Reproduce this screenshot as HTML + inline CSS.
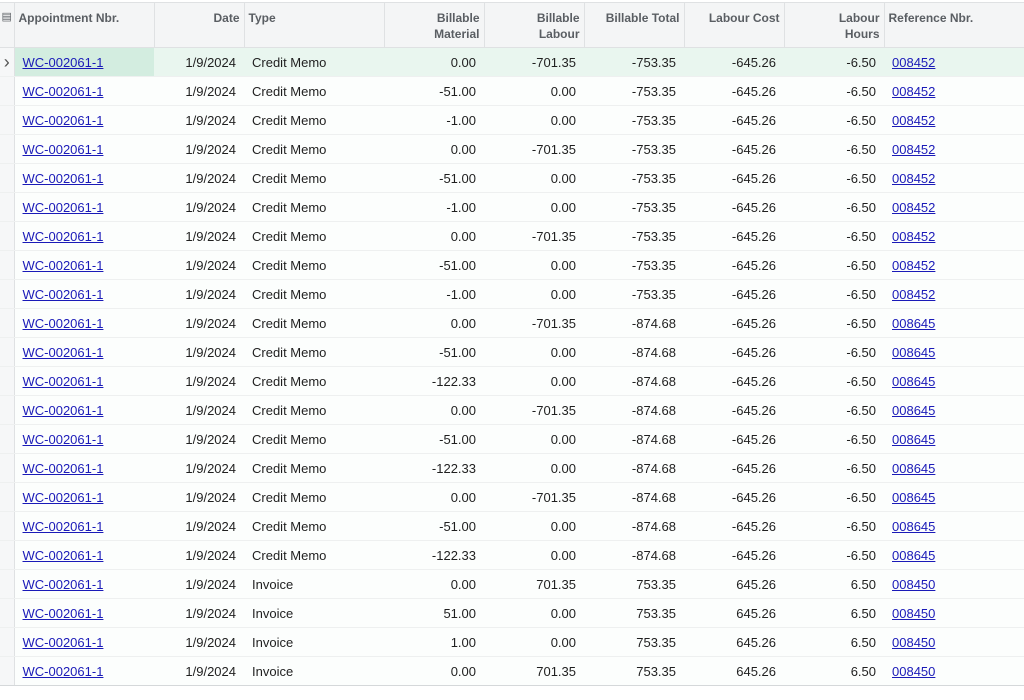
<!DOCTYPE html><html><head><style>
body{margin:0;width:1024px;height:700px;background:#fff;font-family:"Liberation Sans",Arial,sans-serif;overflow:hidden}
table{position:absolute;left:0;top:2px;border-collapse:collapse;table-layout:fixed;width:1024px}
th{height:45px;background:#f4f5f6;color:#5a5e63;font-weight:bold;font-size:12px;vertical-align:top;padding:7px 4px 0 4px;line-height:16px;border-right:1px solid #dfe1e3;border-bottom:1px solid #dfe1e3;border-top:1px solid #dfe1e3;box-sizing:border-box}
td{height:29px;font-size:13px;color:#1f1f1f;padding:0 8px;border-bottom:1px solid #eef0f0;box-sizing:border-box;white-space:nowrap}
td.g{background:#f6f7f8;border-right:1px solid #dfe1e3;padding:0;color:#555;font-size:18px;text-align:center}
.r{text-align:right}.l{text-align:left}
a{color:#1a1ab8;text-decoration:underline}
tr.sel td{background:#e9f6ef}
tr.sel td.a{background:#d3ede0}
tr.sel td.g{background:#f6f7f8}
tbody tr td{background:#fcfefd}
</style></head><body>
<table>
<colgroup><col style="width:14px"><col style="width:140px"><col style="width:90px"><col style="width:140px"><col style="width:100px"><col style="width:100px"><col style="width:100px"><col style="width:100px"><col style="width:100px"><col style="width:140px"></colgroup>
<thead><tr><th style="padding:6px 0 0 0;font-weight:normal;font-size:11px">&#9636;</th><th class="l">Appointment Nbr.</th><th class="r">Date</th><th class="l">Type</th><th class="r">Billable<br>Material</th><th class="r">Billable<br>Labour</th><th class="r">Billable Total</th><th class="r">Labour Cost</th><th class="r">Labour<br>Hours</th><th class="l" style="border-right:none">Reference Nbr.</th></tr></thead>
<tbody>
<tr class="sel"><td class="g">&#8250;</td><td class="a"><a>WC-002061-1</a></td><td class="r">1/9/2024</td><td>Credit Memo</td><td class="r">0.00</td><td class="r">-701.35</td><td class="r">-753.35</td><td class="r">-645.26</td><td class="r">-6.50</td><td><a>008452</a></td></tr>
<tr><td class="g"></td><td><a>WC-002061-1</a></td><td class="r">1/9/2024</td><td>Credit Memo</td><td class="r">-51.00</td><td class="r">0.00</td><td class="r">-753.35</td><td class="r">-645.26</td><td class="r">-6.50</td><td><a>008452</a></td></tr>
<tr><td class="g"></td><td><a>WC-002061-1</a></td><td class="r">1/9/2024</td><td>Credit Memo</td><td class="r">-1.00</td><td class="r">0.00</td><td class="r">-753.35</td><td class="r">-645.26</td><td class="r">-6.50</td><td><a>008452</a></td></tr>
<tr><td class="g"></td><td><a>WC-002061-1</a></td><td class="r">1/9/2024</td><td>Credit Memo</td><td class="r">0.00</td><td class="r">-701.35</td><td class="r">-753.35</td><td class="r">-645.26</td><td class="r">-6.50</td><td><a>008452</a></td></tr>
<tr><td class="g"></td><td><a>WC-002061-1</a></td><td class="r">1/9/2024</td><td>Credit Memo</td><td class="r">-51.00</td><td class="r">0.00</td><td class="r">-753.35</td><td class="r">-645.26</td><td class="r">-6.50</td><td><a>008452</a></td></tr>
<tr><td class="g"></td><td><a>WC-002061-1</a></td><td class="r">1/9/2024</td><td>Credit Memo</td><td class="r">-1.00</td><td class="r">0.00</td><td class="r">-753.35</td><td class="r">-645.26</td><td class="r">-6.50</td><td><a>008452</a></td></tr>
<tr><td class="g"></td><td><a>WC-002061-1</a></td><td class="r">1/9/2024</td><td>Credit Memo</td><td class="r">0.00</td><td class="r">-701.35</td><td class="r">-753.35</td><td class="r">-645.26</td><td class="r">-6.50</td><td><a>008452</a></td></tr>
<tr><td class="g"></td><td><a>WC-002061-1</a></td><td class="r">1/9/2024</td><td>Credit Memo</td><td class="r">-51.00</td><td class="r">0.00</td><td class="r">-753.35</td><td class="r">-645.26</td><td class="r">-6.50</td><td><a>008452</a></td></tr>
<tr><td class="g"></td><td><a>WC-002061-1</a></td><td class="r">1/9/2024</td><td>Credit Memo</td><td class="r">-1.00</td><td class="r">0.00</td><td class="r">-753.35</td><td class="r">-645.26</td><td class="r">-6.50</td><td><a>008452</a></td></tr>
<tr><td class="g"></td><td><a>WC-002061-1</a></td><td class="r">1/9/2024</td><td>Credit Memo</td><td class="r">0.00</td><td class="r">-701.35</td><td class="r">-874.68</td><td class="r">-645.26</td><td class="r">-6.50</td><td><a>008645</a></td></tr>
<tr><td class="g"></td><td><a>WC-002061-1</a></td><td class="r">1/9/2024</td><td>Credit Memo</td><td class="r">-51.00</td><td class="r">0.00</td><td class="r">-874.68</td><td class="r">-645.26</td><td class="r">-6.50</td><td><a>008645</a></td></tr>
<tr><td class="g"></td><td><a>WC-002061-1</a></td><td class="r">1/9/2024</td><td>Credit Memo</td><td class="r">-122.33</td><td class="r">0.00</td><td class="r">-874.68</td><td class="r">-645.26</td><td class="r">-6.50</td><td><a>008645</a></td></tr>
<tr><td class="g"></td><td><a>WC-002061-1</a></td><td class="r">1/9/2024</td><td>Credit Memo</td><td class="r">0.00</td><td class="r">-701.35</td><td class="r">-874.68</td><td class="r">-645.26</td><td class="r">-6.50</td><td><a>008645</a></td></tr>
<tr><td class="g"></td><td><a>WC-002061-1</a></td><td class="r">1/9/2024</td><td>Credit Memo</td><td class="r">-51.00</td><td class="r">0.00</td><td class="r">-874.68</td><td class="r">-645.26</td><td class="r">-6.50</td><td><a>008645</a></td></tr>
<tr><td class="g"></td><td><a>WC-002061-1</a></td><td class="r">1/9/2024</td><td>Credit Memo</td><td class="r">-122.33</td><td class="r">0.00</td><td class="r">-874.68</td><td class="r">-645.26</td><td class="r">-6.50</td><td><a>008645</a></td></tr>
<tr><td class="g"></td><td><a>WC-002061-1</a></td><td class="r">1/9/2024</td><td>Credit Memo</td><td class="r">0.00</td><td class="r">-701.35</td><td class="r">-874.68</td><td class="r">-645.26</td><td class="r">-6.50</td><td><a>008645</a></td></tr>
<tr><td class="g"></td><td><a>WC-002061-1</a></td><td class="r">1/9/2024</td><td>Credit Memo</td><td class="r">-51.00</td><td class="r">0.00</td><td class="r">-874.68</td><td class="r">-645.26</td><td class="r">-6.50</td><td><a>008645</a></td></tr>
<tr><td class="g"></td><td><a>WC-002061-1</a></td><td class="r">1/9/2024</td><td>Credit Memo</td><td class="r">-122.33</td><td class="r">0.00</td><td class="r">-874.68</td><td class="r">-645.26</td><td class="r">-6.50</td><td><a>008645</a></td></tr>
<tr><td class="g"></td><td><a>WC-002061-1</a></td><td class="r">1/9/2024</td><td>Invoice</td><td class="r">0.00</td><td class="r">701.35</td><td class="r">753.35</td><td class="r">645.26</td><td class="r">6.50</td><td><a>008450</a></td></tr>
<tr><td class="g"></td><td><a>WC-002061-1</a></td><td class="r">1/9/2024</td><td>Invoice</td><td class="r">51.00</td><td class="r">0.00</td><td class="r">753.35</td><td class="r">645.26</td><td class="r">6.50</td><td><a>008450</a></td></tr>
<tr><td class="g"></td><td><a>WC-002061-1</a></td><td class="r">1/9/2024</td><td>Invoice</td><td class="r">1.00</td><td class="r">0.00</td><td class="r">753.35</td><td class="r">645.26</td><td class="r">6.50</td><td><a>008450</a></td></tr>
<tr><td class="g" style="border-bottom:1px solid #d5d8da"></td><td style="border-bottom:1px solid #d5d8da"><a>WC-002061-1</a></td><td class="r" style="border-bottom:1px solid #d5d8da">1/9/2024</td><td style="border-bottom:1px solid #d5d8da">Invoice</td><td class="r" style="border-bottom:1px solid #d5d8da">0.00</td><td class="r" style="border-bottom:1px solid #d5d8da">701.35</td><td class="r" style="border-bottom:1px solid #d5d8da">753.35</td><td class="r" style="border-bottom:1px solid #d5d8da">645.26</td><td class="r" style="border-bottom:1px solid #d5d8da">6.50</td><td style="border-bottom:1px solid #d5d8da"><a>008450</a></td></tr>
</tbody></table>
</body></html>
